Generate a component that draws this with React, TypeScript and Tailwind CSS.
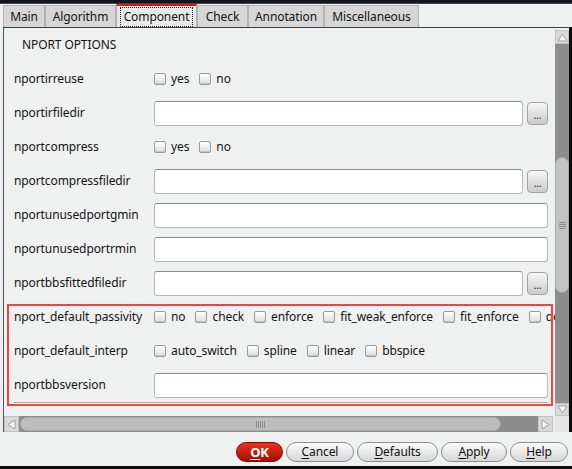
import React from "react";

function Checkbox() {
  return (
    <span className="inline-block w-[12px] h-[12px] rounded-[2px] border border-[#9a9a9a] bg-linear-to-b from-[#ffffff] to-[#dcdcdc] shadow-[inset_0_-1px_0_#c4c4c4] shrink-0" />
  );
}

function CheckItem({ label }: { label: string }) {
  return (
    <span className="flex items-center mr-[10px] shrink-0">
      <Checkbox />
      <span className="ml-[5px]">{label}</span>
    </span>
  );
}

function Input({ w }: { w: string }) {
  return (
    <div
      className={
        "h-[25px] bg-white rounded-[3px] border border-[#b8b8b8] border-t-[#8a8a8a] shrink-0 " + w
      }
    />
  );
}

function DotsButton() {
  return (
    <div className="ml-[4px] w-[21px] h-[23px] rounded-[4px] border border-[#a3a3a3] bg-linear-to-b from-[#f7f7f7] to-[#cbcbcb] flex items-center justify-center text-[10px] leading-none pt-[3px] shrink-0">
      ...
    </div>
  );
}

function Row({ label, children }: { label: string; children: React.ReactNode }) {
  return (
    <div className="h-[34px] flex items-center whitespace-nowrap">
      <div className="w-[150px] pl-[10px] shrink-0">{label}</div>
      <div className="flex items-center">{children}</div>
    </div>
  );
}

function FileRow({ label }: { label: string }) {
  return (
    <Row label={label}>
      <Input w="w-[369px]" />
      <DotsButton />
    </Row>
  );
}

function TextRow({ label }: { label: string }) {
  return (
    <Row label={label}>
      <Input w="w-[394px]" />
    </Row>
  );
}

function CheckRow({ label, items }: { label: string; items: string[] }) {
  return (
    <Row label={label}>
      {items.map((i) => (
        <CheckItem key={i} label={i} />
      ))}
    </Row>
  );
}

function Arrow({ dir }: { dir: "up" | "down" | "left" | "right" }) {
  const pts =
    dir === "up"
      ? "5.5,2 10,9 1,9"
      : dir === "down"
      ? "1,2 10,2 5.5,9"
      : dir === "left"
      ? "2,5.5 9,1 9,10"
      : "2,1 9,5.5 2,10";
  return (
    <svg width="11" height="11" viewBox="0 0 11 11">
      <polygon points={pts} fill="#f6f6f6" stroke="#a0a0a0" strokeWidth="1" />
    </svg>
  );
}

const tabs: { name: string; w: string; sel?: boolean }[] = [
  { name: "Main", w: "w-[42px]" },
  { name: "Algorithm", w: "w-[71px]" },
  { name: "Component", w: "w-[81px]", sel: true },
  { name: "Check", w: "w-[51px]" },
  { name: "Annotation", w: "w-[76px]" },
  { name: "Miscellaneous", w: "w-[95px]" },
];

function Btn({
  w,
  first,
  rest,
  red,
}: {
  w: string;
  first: string;
  rest: string;
  red?: boolean;
}) {
  return (
    <div
      className={
        "h-[20px] rounded-[10px] flex items-center justify-center shrink-0 " +
        w +
        (red
          ? " bg-linear-to-b from-[#e8341f] to-[#a50b06] border border-[#7a0a05] text-white font-bold text-[13px]"
          : " bg-linear-to-b from-[#fbfbfb] to-[#d6d6d6] border border-[#8e8e8e] text-[#111]")
      }
    >
      <span className="underline underline-offset-[2px]">{first}</span>
      <span>{rest}</span>
    </div>
  );
}

export default function App() {
  return (
    <div className="w-[572px] h-[469px] bg-[#eff0f0] relative overflow-hidden flex flex-col font-['Noto_Sans',sans-serif] text-[12px] tracking-[-0.1px] text-[#141414] leading-none">
      {/* top dark strip */}
      <div className="h-[4px] bg-[#14161b] border-b border-[#3a4558] shrink-0" />
      {/* tabs */}
      <div className="h-[23px] flex items-end pl-[3px] shrink-0">
        {tabs.map((t) =>
          t.sel ? (
            <div
              key={t.name}
              className={
                "h-[23px] border-t-2 border-t-[#d21e1e] border-x border-x-[#b0b0b0] bg-[#e9e9e9] flex items-center justify-center shrink-0 " +
                t.w
              }
            >
              <span className="border border-dotted border-[#222] px-[3px] py-[3px]">{t.name}</span>
            </div>
          ) : (
            <div
              key={t.name}
              className={
                "h-[22px] border-t border-x border-[#b3b3b3] bg-[#d6d6d6] flex items-center justify-center shrink-0 " +
                t.w
              }
            >
              {t.name}
            </div>
          )
        )}
      </div>
      {/* panel */}
      <div className="h-[405px] ml-[3px] border-t border-t-[#404040] border-l border-l-[#555] border-r-[3px] border-r-[#0c0c0c] flex flex-col shrink-0">
        <div className="h-[388px] flex">
          {/* viewport */}
          <div className="w-[551px] overflow-hidden">
            <div className="w-[700px]">
              <div className="h-[34px] flex items-center pl-[18px]">NPORT OPTIONS</div>
              <CheckRow label="nportirreuse" items={["yes", "no"]} />
              <FileRow label="nportirfiledir" />
              <CheckRow label="nportcompress" items={["yes", "no"]} />
              <FileRow label="nportcompressfiledir" />
              <TextRow label="nportunusedportgmin" />
              <TextRow label="nportunusedportrmin" />
              <FileRow label="nportbbsfittedfiledir" />
              <CheckRow
                label="nport_default_passivity"
                items={["no", "check", "enforce", "fit_weak_enforce", "fit_enforce", "default"]}
              />
              <CheckRow label="nport_default_interp" items={["auto_switch", "spline", "linear", "bbspice"]} />
              <TextRow label="nportbbsversion" />
              <div className="ml-[10px] w-[534px] h-[1px] bg-[#a3a3a3]" />
              <div className="ml-[10px] w-[534px] h-[1px] bg-[#ffffff]" />
            </div>
          </div>
          {/* vertical scrollbar */}
          <div className="w-[14px] flex flex-col">
            <div className="h-[2px]" />
            <div className="h-[14px] bg-[#d9d9d9] border border-[#c2c2c2] flex items-center justify-center">
              <Arrow dir="up" />
            </div>
            <div className="flex-1 bg-[#8d8d8d] flex flex-col">
              <div className="h-[113px]" />
              <div className="h-[136px] rounded-[7px] bg-[#c3c3c3] border border-[#a9a9a9] flex flex-col items-center justify-center gap-[1px]">
                <div className="w-[7px] h-[1px] bg-[#8c8c8c]" />
                <div className="w-[7px] h-[1px] bg-[#8c8c8c]" />
                <div className="w-[7px] h-[1px] bg-[#8c8c8c]" />
                <div className="w-[7px] h-[1px] bg-[#8c8c8c]" />
              </div>
            </div>
            <div className="h-[13px] bg-[#d9d9d9] border border-[#c2c2c2] flex items-center justify-center">
              <Arrow dir="down" />
            </div>
          </div>
        </div>
        {/* horizontal scrollbar */}
        <div className="h-[16px] flex">
          <div className="w-[15px] bg-[#d9d9d9] border border-[#c2c2c2] flex items-center justify-center">
            <Arrow dir="left" />
          </div>
          <div className="w-[519px] bg-[#8d8d8d] flex py-[1px]">
            <div className="w-[481px] ml-[1px] rounded-[7px] bg-[#bdbdbd] border border-[#a9a9a9] flex items-center gap-[1px] pl-[235px]">
              <div className="w-[1px] h-[7px] bg-[#8c8c8c]" />
              <div className="w-[1px] h-[7px] bg-[#8c8c8c]" />
              <div className="w-[1px] h-[7px] bg-[#8c8c8c]" />
              <div className="w-[1px] h-[7px] bg-[#8c8c8c]" />
              <div className="w-[1px] h-[7px] bg-[#8c8c8c]" />
            </div>
          </div>
          <div className="w-[15px] bg-[#d9d9d9] border border-[#c2c2c2] flex items-center justify-center">
            <Arrow dir="right" />
          </div>
          <div className="w-[2px]" />
          <div className="w-[14px] bg-[#e6e6e6]" />
        </div>
      </div>
      {/* buttons */}
      <div className="flex-1 flex items-start justify-end pt-[10px] pr-[4px] gap-[3px]">
        <Btn w="w-[47px]" first="O" rest="K" red />
        <Btn w="w-[68px]" first="C" rest="ancel" />
        <Btn w="w-[81px]" first="D" rest="efaults" />
        <Btn w="w-[66px]" first="A" rest="pply" />
        <Btn w="w-[58px]" first="H" rest="elp" />
      </div>
      <div className="h-[3px] bg-[#0c0c0c] shrink-0" />
      {/* red annotation overlay */}
      <div className="absolute left-[7px] top-[304px] w-[546px] h-[102px] border-2 border-[#f04444] pointer-events-none" />
    </div>
  );
}
